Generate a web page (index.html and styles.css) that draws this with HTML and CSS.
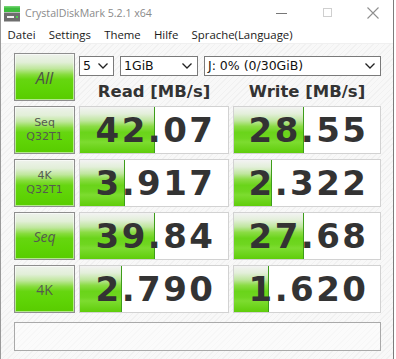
FILE: index.html
```html
<!DOCTYPE html>
<html>
<head>
<meta charset="utf-8">
<link rel="stylesheet" href="styles.css">
</head>
<body>
<div class="window">
  <div class="titlebar">
    <svg class="app-icon" width="16" height="16" viewBox="0 0 16 16">
      <rect x="0" y="0" width="16" height="6" fill="#3dbb3d"/>
      <rect x="0" y="0" width="16" height="1.5" fill="#6fd46f"/>
      <rect x="0" y="6.5" width="16" height="9" fill="#6e6e6e"/>
      <rect x="3" y="10" width="7" height="2" fill="#f2f2f2"/>
      <rect x="12" y="10" width="2" height="2" fill="#4fd04f"/>
    </svg>
    <span class="title">CrystalDiskMark 5.2.1 x64</span>
    <div class="controls">
      <svg class="ctl ctl-min" width="12" height="12" viewBox="0 0 12 12"><line x1="0" y1="6.5" x2="11" y2="6.5" stroke="#777" stroke-width="1"/></svg>
      <svg class="ctl ctl-max" width="12" height="12" viewBox="0 0 12 12"><rect x="1.5" y="1.5" width="8" height="8" fill="none" stroke="#cfcfcf" stroke-width="1"/></svg>
      <svg class="ctl ctl-close" width="12" height="12" viewBox="0 0 12 12"><path d="M0.5 0.5 L11.5 11.5 M11.5 0.5 L0.5 11.5" stroke="#8f8f8f" stroke-width="1.1"/></svg>
    </div>
  </div>
  <div class="menubar">
    <span class="menu-item">Datei</span>
    <span class="menu-item">Settings</span>
    <span class="menu-item">Theme</span>
    <span class="menu-item">Hilfe</span>
    <span class="menu-item">Sprache(Language)</span>
  </div>
  <div class="client">
    <div class="grid">
      <div class="btn btn-all">All</div>
      <div class="top-right">
        <div class="selects">
          <div class="select sel-count"><span>5</span><svg class="chev" width="10" height="6" viewBox="0 0 10 6"><polyline points="0.5,0.5 5,5 9.5,0.5" fill="none" stroke="#222" stroke-width="1.3"/></svg></div>
          <div class="select sel-size"><span>1GiB</span><svg class="chev" width="10" height="6" viewBox="0 0 10 6"><polyline points="0.5,0.5 5,5 9.5,0.5" fill="none" stroke="#222" stroke-width="1.3"/></svg></div>
          <div class="select sel-drive"><span>J: 0% (0/30GiB)</span><svg class="chev" width="10" height="6" viewBox="0 0 10 6"><polyline points="0.5,0.5 5,5 9.5,0.5" fill="none" stroke="#222" stroke-width="1.3"/></svg></div>
        </div>
        <div class="headers">
          <div class="head">Read [MB/s]</div>
          <div class="head">Write [MB/s]</div>
        </div>
      </div>

      <div class="btn btn-label"><span class="ln">Seq</span><span class="ln">Q32T1</span></div>
      <div class="cell" style="--w:75px">42.07</div>
      <div class="cell" style="--w:70px">28.55</div>

      <div class="btn btn-label"><span class="ln">4K</span><span class="ln">Q32T1</span></div>
      <div class="cell" style="--w:45px">3.917</div>
      <div class="cell" style="--w:38px">2.322</div>

      <div class="btn btn-single btn-italic">Seq</div>
      <div class="cell" style="--w:75px">39.84</div>
      <div class="cell" style="--w:70px">27.68</div>

      <div class="btn btn-single">4K</div>
      <div class="cell" style="--w:42px">2.790</div>
      <div class="cell" style="--w:35px">1.620</div>
    </div>
    <div class="comment"></div>
  </div>
</div>
</body>
</html>
```
FILE: styles.css
```css
* { box-sizing: border-box; }
html, body {
  margin: 0;
  padding: 0;
  background: #ffffff;
}
.window {
  width: 394px;
  height: 359px;
  border-left: 1px solid #9a9a9a;
  border-right: 1px solid #7c7c7c;
  background: #ffffff;
  display: flex;
  flex-direction: column;
  overflow: hidden;
}
.titlebar {
  height: 25px;
  display: flex;
  align-items: center;
  padding-left: 3px;
  background: #ffffff;
}
.app-icon {
  display: block;
  margin-top: 2px;
  flex: none;
}
.title {
  margin-left: 5px;
  font-family: "Open Sans", "Noto Sans", sans-serif;
  font-size: 10.6px;
  color: #8a8a8a;
  line-height: 1;
  margin-top: 1px;
}
.controls {
  margin-left: auto;
  display: flex;
  align-items: center;
  margin-right: 14px;
}
.ctl { display: block; }
.ctl-min { margin-right: 34px; }
.ctl-max { margin-right: 33px; }
.menubar {
  height: 19px;
  display: flex;
  align-items: center;
  background: #ffffff;
  border-bottom: 1px solid #f0f0f0;
}
.menu-item {
  font-family: "Open Sans", "Noto Sans", sans-serif;
  font-size: 11.4px;
  color: #1a1a1a;
  padding: 0 6.6px;
  line-height: 19px;
}
.client {
  flex: 1;
  padding: 9px 0 0 13px;
  background:
    repeating-linear-gradient(-45deg, #f1f1f1 0px, #f1f1f1 1px, #f8f8f8 1px, #f8f8f8 4px);
}
.grid {
  display: grid;
  grid-template-columns: 61px 150px 148px;
  grid-template-rows: 48px 48px 48px 48px 48px;
  column-gap: 4px;
  row-gap: 5px;
}
.btn {
  border: 1px solid #8e8e8e;
  box-shadow: inset 0 0 0 1px rgba(255,255,255,0.55);
  background: linear-gradient(to bottom,
    #eef2ec 0%, #e2efd8 18%, #bfe79c 32%, #86dc3c 45%, #66d610 55%, #5fd406 75%, #58cc00 100%);
  display: flex;
  align-items: center;
  justify-content: center;
  text-align: center;
  font-family: "Open Sans", "Noto Sans", sans-serif;
  color: #555a50;
}
.btn-all {
  font-size: 16.5px;
  font-style: italic;
  color: #4d5547;
}
.btn-label {
  flex-direction: column;
  font-family: "DejaVu Sans", Verdana, sans-serif;
  font-size: 11px;
}
.ln {
  display: block;
  line-height: 14px;
  height: 14px;
}
.btn-single {
  font-size: 14px;
}
.btn-italic {
  font-style: italic;
}
.top-right {
  grid-column: 2 / 4;
  display: flex;
  flex-direction: column;
  padding-top: 3px;
}
.selects {
  display: flex;
  column-gap: 6px;
  height: 20px;
}
.select {
  height: 20px;
  border: 1px solid #7a7a7a;
  background: #ffffff;
  display: flex;
  align-items: center;
  padding: 0 5px 0 3px;
  font-family: "DejaVu Sans", Verdana, sans-serif;
  font-size: 12.5px;
  color: #111;
}
.select span { line-height: 1; }
.chev {
  margin-left: auto;
  display: block;
  flex: none;
}
.sel-count { width: 35px; }
.sel-size { width: 78px; }
.sel-drive { width: 177px; }
.headers {
  display: grid;
  grid-template-columns: 150px 148px;
  column-gap: 4px;
  margin-top: 6px;
}
.head {
  text-align: center;
  font-family: "DejaVu Sans", Verdana, sans-serif;
  font-weight: bold;
  font-size: 16.5px;
  line-height: 20px;
  color: #333333;
}
.cell {
  border: 1px solid #d2d2d2;
  background:
    linear-gradient(#3d9d1a, #3d9d1a) no-repeat calc(var(--w) - 1px) 0 / 1px 100%,
    linear-gradient(to bottom,
      #f3f3f3 0%, #e3efda 15%, #bfe69e 30%, #8bdc45 42%, #6ad41a 55%, #6fd620 68%, #7ddc30 76%, #5fcd0a 100%) no-repeat 0 0 / var(--w) 100%,
    #ffffff;
  display: flex;
  align-items: center;
  justify-content: center;
  padding-left: 3px;
  font-family: "DejaVu Sans", Verdana, sans-serif;
  font-weight: bold;
  font-size: 34px;
  letter-spacing: 2.5px;
  line-height: 1;
  color: #333333;
}
.comment {
  width: 367px;
  height: 29px;
  margin-top: 9px;
  border: 1px solid #a9a9a9;
  background: rgba(255,255,255,0.45);
}
```
